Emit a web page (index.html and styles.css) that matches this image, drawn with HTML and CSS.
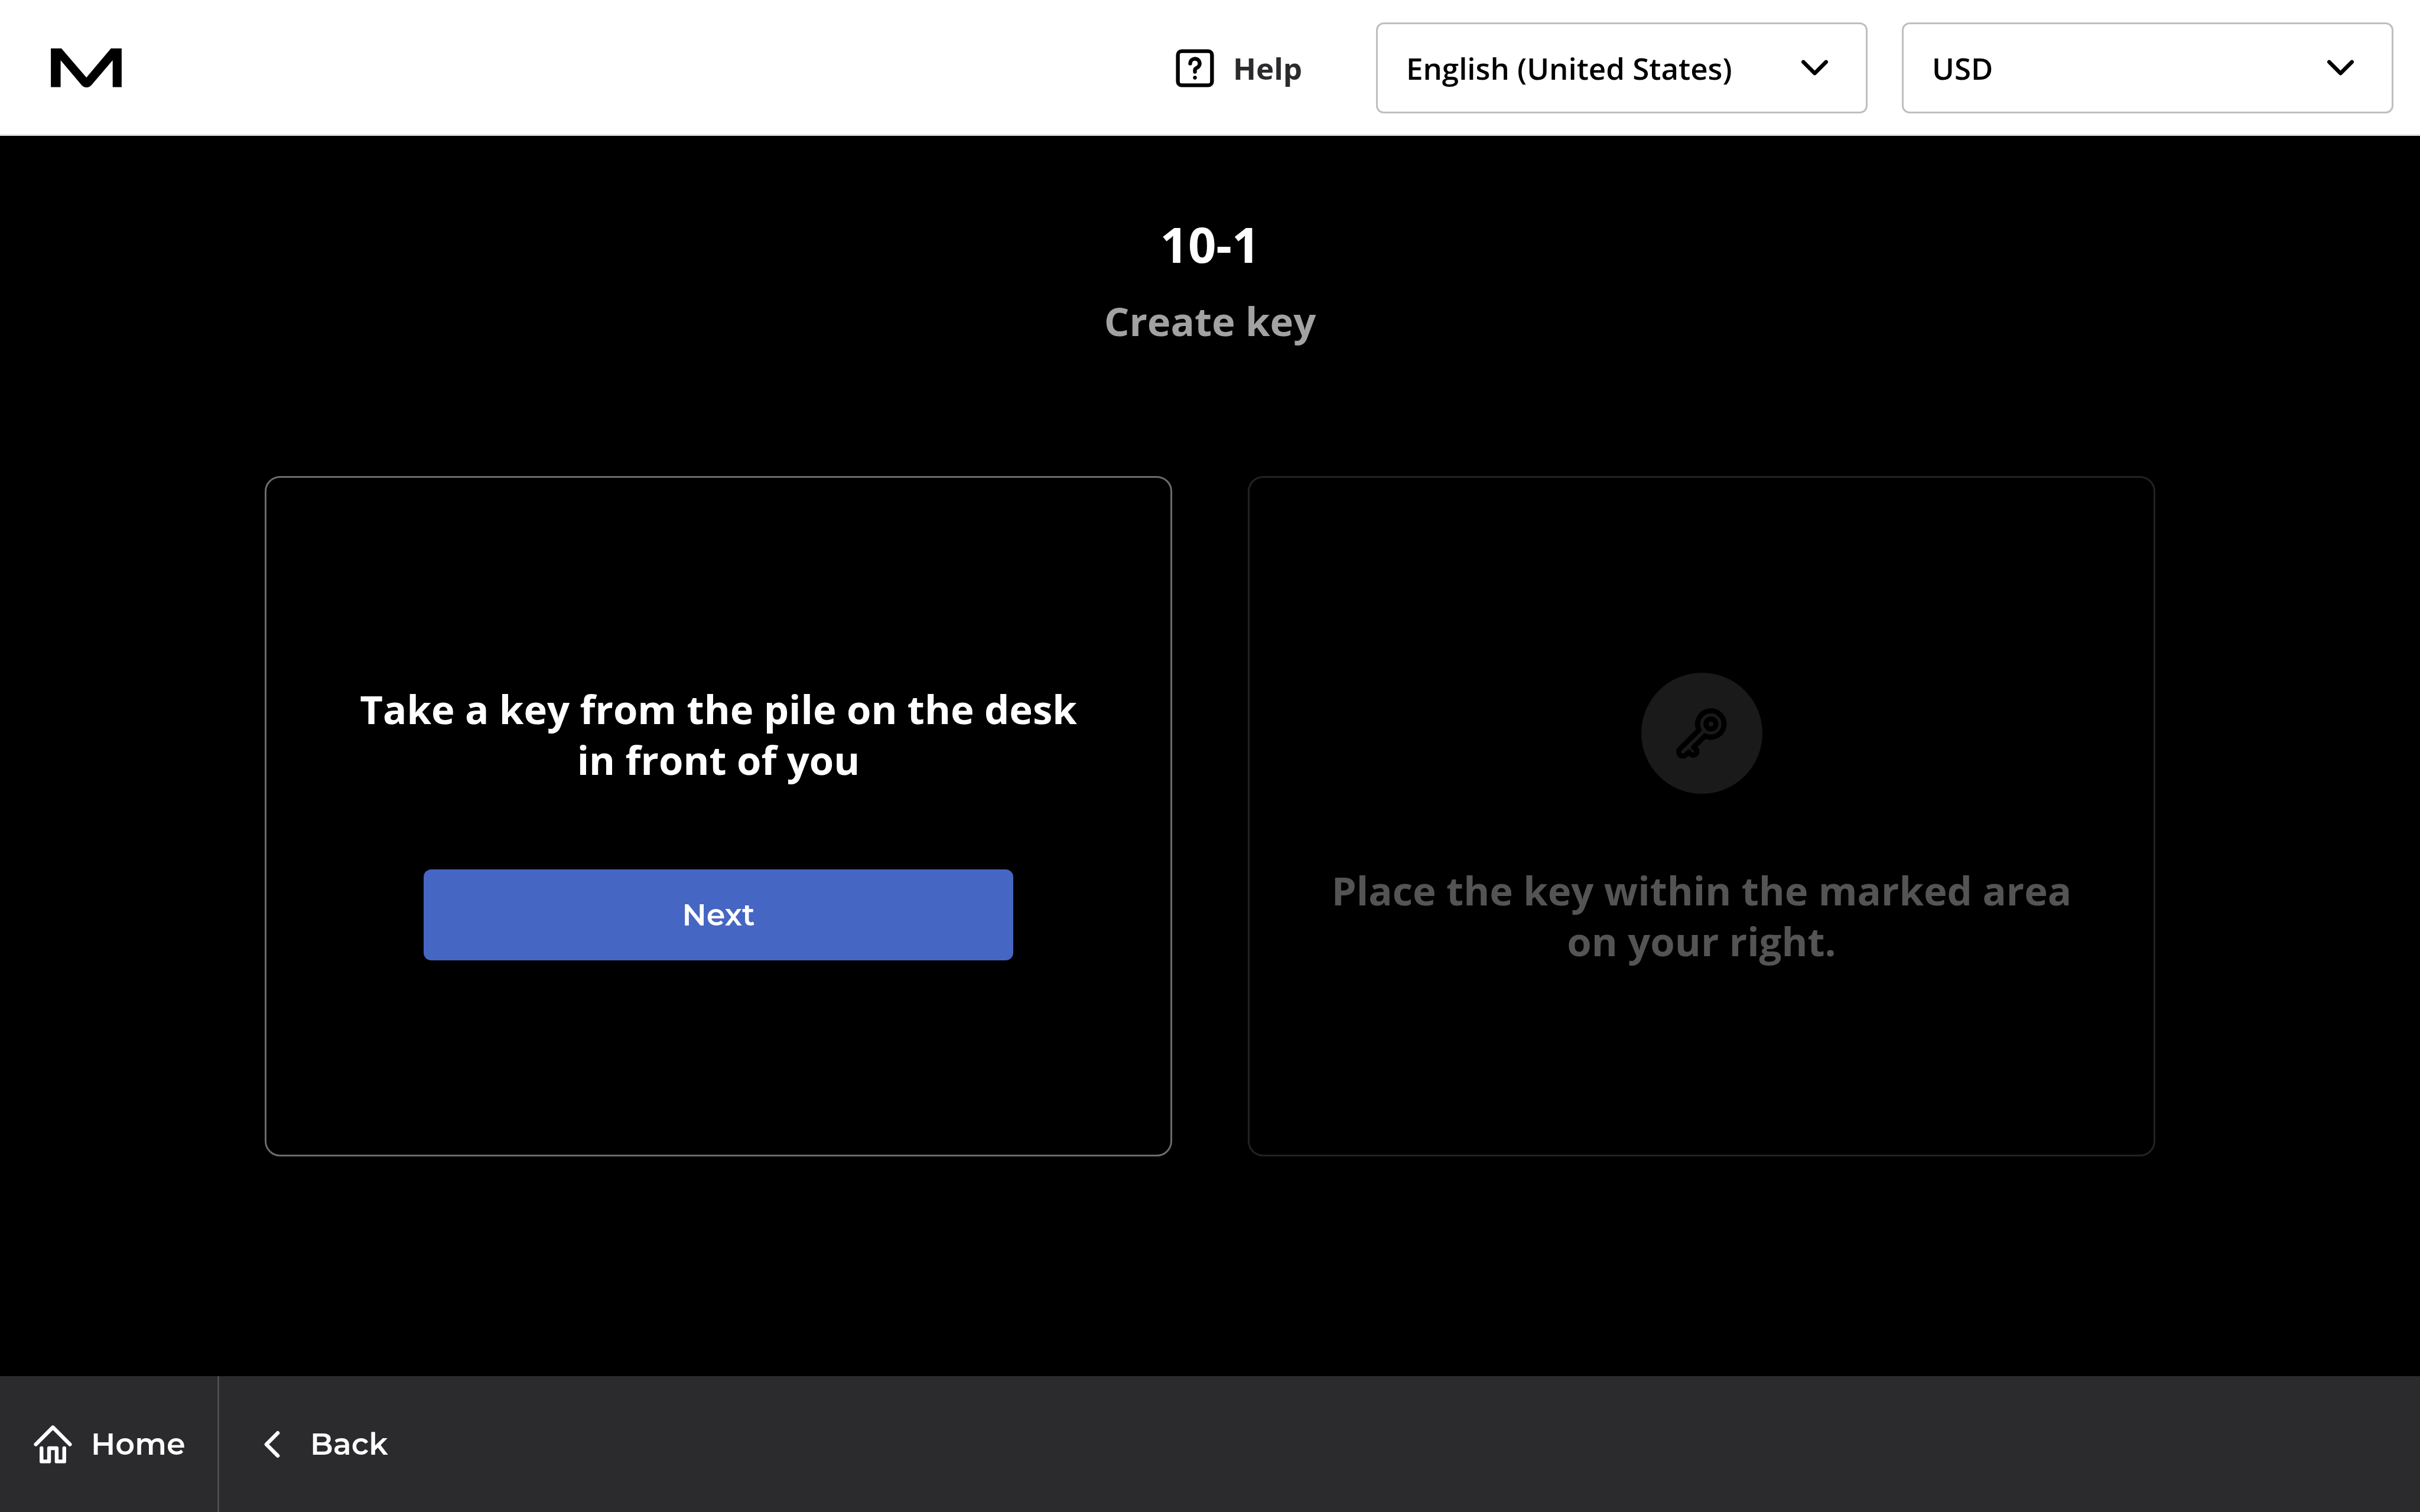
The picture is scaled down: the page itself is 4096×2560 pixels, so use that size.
FILE: index.html
```html
<!DOCTYPE html>
<html lang="en">
<head>
<meta charset="utf-8">
<title>Create key</title>
<meta name="viewport" content="width=device-width, initial-scale=1">
<link rel="stylesheet" href="styles.css">
</head>
<body>
<header class="topbar">
  <a class="logo" href="#" aria-label="Start page">
    <svg viewBox="0 0 450 248" aria-hidden="true"><path d="M0 0H67L226 185L382 0H450V246H393V75L260 231Q245 248 227 248Q208 248 195 233L62 75V246H0Z"/></svg>
  </a>
  <div class="tools">
    <button class="help" type="button">
      <svg class="icon" viewBox="0 0 24 24" aria-hidden="true"><rect x="3" y="3" width="18" height="18" rx="2"/><path d="M9.5 9.5a2.5 2.5 0 1 1 3.5 2.3c-.6.25-1 .7-1 1.2v.9"/><circle class="dot" cx="12" cy="17" r="1"/></svg>
      <span>Help</span>
    </button>
    <div class="pickers">
      <div class="picker">
        <select aria-label="Language"><option>English (United States)</option></select>
        <svg class="icon chevron" viewBox="0 0 24 24" aria-hidden="true"><path d="M6 9l6 6 6-6"/></svg>
      </div>
      <div class="picker">
        <select aria-label="Currency"><option>USD</option></select>
        <svg class="icon chevron" viewBox="0 0 24 24" aria-hidden="true"><path d="M6 9l6 6 6-6"/></svg>
      </div>
    </div>
  </div>
</header>
<main class="content">
  <h1 class="title">10-1</h1>
  <p class="subtitle">Create key</p>
  <div class="steps">
    <section class="step">
      <h2 class="step-text">Take a key from the pile on the desk<br>in front of you</h2>
      <button class="next" type="button">Next</button>
    </section>
    <section class="step step-waiting">
      <div class="badge">
        <svg class="key" viewBox="348 324 384 384" aria-hidden="true"><path d="M524 493L404 612A25 25 0 0 0 439 653L459 634L473 650A24 24 0 0 0 507 618L489 604L563 531A84 84 0 1 0 524 493Z"/><circle cx="600" cy="455" r="31.5"/></svg>
      </div>
      <h2 class="step-text">Place the key within the marked area<br>on your right.</h2>
    </section>
  </div>
</main>
<nav class="bottombar">
  <a class="nav-item" href="#">
    <svg class="icon" viewBox="0 0 24 24" aria-hidden="true"><path d="M3 12l9-9 9 9M6 14v7h4v-7h4v7h4v-7"/></svg>
    <span>Home</span>
  </a>
  <a class="nav-item" href="#">
    <svg class="icon" viewBox="0 0 24 24" aria-hidden="true"><path d="M15 6l-6 6 6 6"/></svg>
    <span>Back</span>
  </a>
</nav>
</body>
</html>
```

FILE: styles.css
```css
*,
*::before,
*::after {
  box-sizing: border-box;
}

body {
  margin: 0;
  min-height: 100vh;
  display: flex;
  flex-direction: column;
  background: #000;
  color: #fff;
  font-family: "Open Sans", sans-serif;
  font-size: 51px;
}

h1,
h2,
p {
  margin: 0;
}

button,
select {
  font: inherit;
  color: inherit;
  cursor: pointer;
}

.icon {
  display: block;
  flex: none;
  width: 77px;
  height: 77px;
  fill: none;
  stroke: currentColor;
  stroke-width: 2;
  stroke-linecap: round;
  stroke-linejoin: round;
}

.icon .dot {
  fill: currentColor;
  stroke: none;
}

/* Header */
.topbar {
  display: flex;
  align-items: center;
  justify-content: space-between;
  min-height: 230px;
  padding: 3px 45px 0 86px;
  background: #fff;
  border-bottom: 3px solid #e5e5e5;
  color: #000;
}

.logo svg {
  display: block;
  width: 120px;
  height: 66px;
}

.tools {
  display: flex;
  align-items: center;
  gap: 125px;
}

.help {
  display: flex;
  align-items: center;
  gap: 26px;
  padding: 0;
  border: 0;
  background: none;
  font-weight: 700;
}

.help span {
  color: #2b2b2d;
}

.pickers {
  display: flex;
  gap: 58px;
}

.picker {
  position: relative;
  width: 832px;
}

.picker select {
  display: block;
  width: 100%;
  height: 154px;
  padding: 0 128px 0 48px;
  border: 3px solid #bfbfbf;
  border-radius: 13px;
  background: #fff;
  font-weight: 600;
  appearance: none;
}

.picker .chevron {
  position: absolute;
  top: 38px;
  right: 51px;
  pointer-events: none;
}

/* Main */
.content {
  flex: 1;
  padding: 128px 448px;
  text-align: center;
}

.title {
  font-size: 83px;
  line-height: 109px;
  font-weight: 700;
}

.subtitle {
  margin-top: 33px;
  color: #a2a2a2;
  font-size: 67px;
  line-height: 86px;
  font-weight: 700;
}

.steps {
  display: grid;
  grid-template-columns: 1fr 1fr;
  gap: 128px;
  margin-top: 220px;
}

.step {
  display: flex;
  flex-direction: column;
  align-items: center;
  min-height: 1152px;
  padding-top: 348px;
  border: 3px solid #6b6b6b;
  border-radius: 26px;
}

.step-text {
  font-size: 67px;
  line-height: 86px;
  font-weight: 700;
}

.next {
  width: calc(65% + 4px);
  height: 154px;
  margin-top: 143px;
  border: 0;
  border-radius: 13px;
  background: #4666c4;
  font-family: Montserrat, Inter, sans-serif;
  font-weight: 600;
}

.step-waiting {
  padding-top: 330px;
  border-color: #222;
  color: #545454;
}

.badge {
  display: grid;
  place-items: center;
  width: 205px;
  height: 205px;
  margin-bottom: 120px;
  border-radius: 50%;
  background: #1a1a1a;
}

.key {
  width: 102px;
  height: 102px;
  fill: none;
  stroke: #000;
  stroke-width: 33;
  stroke-linejoin: round;
}

/* Footer */
.bottombar {
  display: flex;
  min-height: 230px;
  background: #2b2b2d;
  font-family: Montserrat, Inter, sans-serif;
  font-weight: 600;
}

.nav-item {
  display: flex;
  align-items: center;
  gap: 26px;
  min-width: 371px;
  padding: 0 51px;
  color: #fff;
  text-decoration: none;
}

.nav-item:first-child {
  border-right: 3px solid #4d4d4f;
}
```
